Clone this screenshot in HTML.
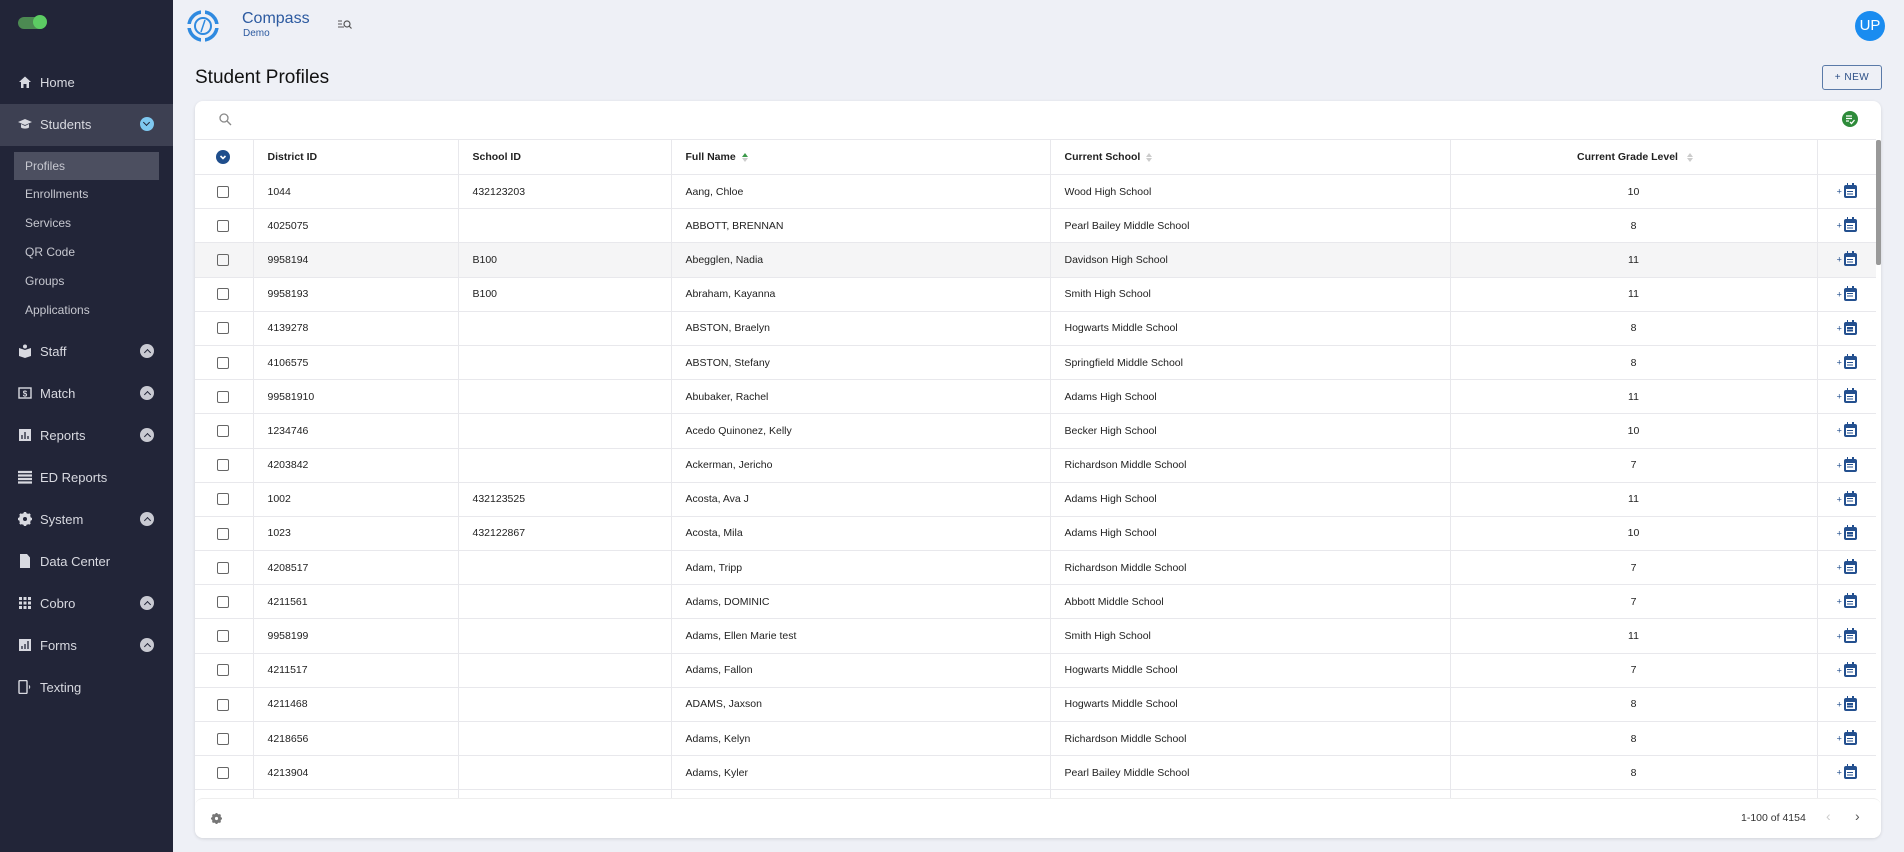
<!DOCTYPE html>
<html><head><meta charset="utf-8"><style>
*{box-sizing:border-box;margin:0;padding:0}
body{width:1904px;height:852px;overflow:hidden;background:#eef0f6;font-family:"Liberation Sans",sans-serif;position:relative}
.sb{position:absolute;left:0;top:0;width:173px;height:852px;background:#222538;color:#d8d9e0}
.nav{position:absolute;left:0;width:173px;height:28px;font-size:13px;display:flex;align-items:center}
.nav .ic{position:absolute;left:18px;top:7px;width:14px;height:14px}
.nav .t{position:absolute;left:40px}
.nav .ch{position:absolute;left:140px;top:7px;width:14px;height:14px;border-radius:50%;background:#c9cad2}
.nav .ch:after{content:"";position:absolute;left:4.5px;top:5.5px;width:4px;height:4px;border-left:1.6px solid #222538;border-top:1.6px solid #222538;transform:rotate(45deg)}
.sub{position:absolute;left:25px;font-size:12px;color:#c7c8d0}
.card{position:absolute;left:195px;top:101px;width:1686px;height:737px;background:#fff;border-radius:8px;box-shadow:0 1px 3px rgba(0,0,0,.12);overflow:hidden}
table{position:absolute;left:0;top:38px;border-collapse:collapse;table-layout:fixed;width:1681px;font-size:10.5px;color:#222}
td,th{height:34.2px;border-bottom:1px solid #e8e8ec;border-right:1px solid #e8e8ec;padding-left:14px;text-align:left;white-space:nowrap}
th{font-weight:bold;font-size:10.5px;height:35px;border-top:1px solid #e8e8ec}
td:last-child,th:last-child{border-right:none}
.cb{display:inline-block;width:12px;height:12px;border:1.6px solid #666;border-radius:2px;margin-left:8px;vertical-align:middle}
.gr{text-align:center;padding-left:0}
.act{padding-left:0;text-align:center}
.cal{display:inline-block;position:relative;width:13px;height:13px;background:#24508f;border-radius:2px;vertical-align:middle;margin-left:2px}
.cal i{position:absolute;left:2px;top:4px;width:9px;height:7px;background:#fff}
.cal i:before{content:"";position:absolute;left:1.5px;top:1.5px;width:6px;height:1.2px;background:#24508f;box-shadow:0 2.5px 0 #24508f}
.cal:before,.cal:after{content:"";position:absolute;top:-2px;width:1.5px;height:3px;background:#24508f}
.cal:before{left:3px}.cal:after{right:3px}
.pl{color:#24508f;font-size:9px;vertical-align:middle}
tr.hl td{background:#f5f5f6}
.sort{display:inline-block;margin-left:6px;vertical-align:middle;width:6px;height:9px;position:relative}
.sort:before{content:"";position:absolute;top:0;border-left:3px solid transparent;border-right:3px solid transparent;border-bottom:4px solid #ccc}
.sort:after{content:"";position:absolute;bottom:0;border-left:3px solid transparent;border-right:3px solid transparent;border-top:4px solid #ccc}
.sort.up:before{border-bottom-color:#3c9a4a}
</style></head><body>
<div class="sb">
 <div style="position:absolute;left:18px;top:17px;width:28px;height:12px;border-radius:6px;background:#4c8a52"></div>
 <div style="position:absolute;left:33px;top:15px;width:14px;height:14px;border-radius:50%;background:#5ccc63"></div>
 <div class="nav" style="top:68px"><svg class="ic" viewBox="0 0 14 14"><path d="M1 7L7 1.5 13 7H11V13H8.5V9H5.5V13H3V7Z" fill="#d8d9e0"/></svg><span class="t">Home</span></div>
 <div style="position:absolute;left:0;top:104px;width:173px;height:42px;background:#3d4052"></div>
 <div class="nav" style="top:110px"><svg class="ic" viewBox="0 0 14 14"><path d="M0 5L7 2 14 5 7 8Z M3 7V10.5C5 12 9 12 11 10.5V7L7 9Z" fill="#d8d9e0"/></svg><span class="t">Students</span><span class="ch" style="background:#7ec8f0;transform:rotate(180deg)"></span></div>
 <div style="position:absolute;left:14px;top:152px;width:145px;height:28px;background:#4c4f60"></div>
 <div class="sub" style="top:159px">Profiles</div>
 <div class="sub" style="top:187px">Enrollments</div>
 <div class="sub" style="top:216px">Services</div>
 <div class="sub" style="top:245px">QR Code</div>
 <div class="sub" style="top:274px">Groups</div>
 <div class="sub" style="top:303px">Applications</div>
 <div class="nav" style="top:337px"><svg class="ic" viewBox="0 0 14 14"><path d="M1 4L7 6 13 4V12L7 14 1 12Z" fill="#d8d9e0"/><circle cx="7" cy="2.5" r="2" fill="#d8d9e0"/></svg><span class="t">Staff</span><span class="ch"></span></div>
 <div class="nav" style="top:379px"><svg class="ic" viewBox="0 0 14 14"><rect x="1" y="2" width="12" height="10" fill="none" stroke="#d8d9e0" stroke-width="1.4"/><text x="7" y="10.5" font-size="8" fill="#d8d9e0" text-anchor="middle" font-weight="bold">$</text></svg><span class="t">Match</span><span class="ch"></span></div>
 <div class="nav" style="top:421px"><svg class="ic" viewBox="0 0 14 14"><rect x="1" y="1" width="12" height="12" fill="#d8d9e0"/><path d="M4 11V7M7 11V4M10 11V8" stroke="#222538" stroke-width="1.3"/></svg><span class="t">Reports</span><span class="ch"></span></div>
 <div class="nav" style="top:463px"><svg class="ic" viewBox="0 0 14 14"><path d="M0 2H14M0 5.5H14M0 9H14M0 12.5H14" stroke="#d8d9e0" stroke-width="2.2"/></svg><span class="t">ED Reports</span></div>
 <div class="nav" style="top:505px"><svg class="ic" viewBox="0 0 14 14"><circle cx="7" cy="7" r="4.5" fill="none" stroke="#d8d9e0" stroke-width="3"/><path d="M7 0V14M0 7H14M2 2L12 12M12 2L2 12" stroke="#d8d9e0" stroke-width="2.5"/><circle cx="7" cy="7" r="2" fill="#222538"/></svg><span class="t">System</span><span class="ch"></span></div>
 <div class="nav" style="top:547px"><svg class="ic" viewBox="0 0 14 14"><path d="M2 0H9L12 3.5V14H2Z" fill="#d8d9e0"/></svg><span class="t">Data Center</span></div>
 <div class="nav" style="top:589px"><svg class="ic" viewBox="0 0 14 14"><g fill="#d8d9e0"><rect x="1" y="1" width="3" height="3"/><rect x="5.5" y="1" width="3" height="3"/><rect x="10" y="1" width="3" height="3"/><rect x="1" y="5.5" width="3" height="3"/><rect x="5.5" y="5.5" width="3" height="3"/><rect x="10" y="5.5" width="3" height="3"/><rect x="1" y="10" width="3" height="3"/><rect x="5.5" y="10" width="3" height="3"/><rect x="10" y="10" width="3" height="3"/></g></svg><span class="t">Cobro</span><span class="ch"></span></div>
 <div class="nav" style="top:631px"><svg class="ic" viewBox="0 0 14 14"><rect x="1" y="1" width="12" height="12" fill="#d8d9e0"/><path d="M4 11V8M7 11V6M10 11V3" stroke="#222538" stroke-width="1.3"/></svg><span class="t">Forms</span><span class="ch"></span></div>
 <div class="nav" style="top:673px"><svg class="ic" viewBox="0 0 14 14"><rect x="1" y="0.5" width="8" height="13" rx="1" fill="none" stroke="#d8d9e0" stroke-width="1.4"/><path d="M11 5.5Q12.5 7 11 8.5" stroke="#d8d9e0" fill="none"/></svg><span class="t">Texting</span></div>
</div>
<svg style="position:absolute;left:185px;top:8px" width="36" height="36" viewBox="0 0 36 36"><circle cx="18" cy="18" r="14" fill="none" stroke="#2f8ae0" stroke-width="3.5"/><circle cx="18" cy="18" r="8" fill="none" stroke="#2f8ae0" stroke-width="2"/><path d="M18 1V8M18 28V35M1 18H8M28 18H35" stroke="#eef0f6" stroke-width="4"/><path d="M20 12L16 24 18 18Z" fill="#2f8ae0" stroke="#2f8ae0" stroke-width="1.5"/></svg>
<div style="position:absolute;left:242px;top:10px;font-size:16px;color:#2c5aa0">Compass</div>
<div style="position:absolute;left:243px;top:28px;font-size:10px;color:#2c5aa0">Demo</div>
<svg style="position:absolute;left:338px;top:19px" width="14" height="12" viewBox="0 0 14 12"><path d="M0 2H4M0 5H4M0 8H6" stroke="#555" stroke-width="1"/><circle cx="9" cy="5" r="3" fill="none" stroke="#555" stroke-width="1.2"/><path d="M11 7L13.5 9.5" stroke="#555" stroke-width="1.2"/></svg>
<div style="position:absolute;left:1855px;top:11px;width:30px;height:30px;border-radius:50%;background:#1a8cf0;color:#fff;font-size:15px;text-align:center;line-height:30px">UP</div>
<div style="position:absolute;left:195px;top:67px;font-size:19px;color:#111">Student Profiles</div>
<div style="position:absolute;left:1822px;top:65px;width:60px;height:25px;border:1px solid #5a7aa8;border-radius:3px;font-size:10px;color:#2c4f86;text-align:center;line-height:23px;letter-spacing:.5px">+ NEW</div>
<div class="card">
 <svg style="position:absolute;left:24px;top:12px" width="13" height="13" viewBox="0 0 13 13"><circle cx="5" cy="5" r="4" fill="none" stroke="#888" stroke-width="1.3"/><path d="M8 8L12 12" stroke="#888" stroke-width="1.3"/></svg>
 <svg style="position:absolute;left:1647px;top:10px" width="16" height="16" viewBox="0 0 16 16"><circle cx="8" cy="8" r="8" fill="#2e8b3a"/><path d="M4 5H10M4 7.5H10M4 10H7" stroke="#fff" stroke-width="1.3"/><path d="M8 11L9.5 12.5 12.5 9" stroke="#fff" stroke-width="1.3" fill="none"/></svg>
 <table>
 <colgroup><col style="width:58px"><col style="width:205px"><col style="width:213px"><col style="width:379px"><col style="width:400px"><col style="width:367px"><col style="width:59px"></colgroup>
 <tr><th><svg style="margin-left:7px;vertical-align:middle" width="14" height="14" viewBox="0 0 14 14"><circle cx="7" cy="7" r="7" fill="#1f4e8c"/><path d="M4.5 6L7 8.5 9.5 6" stroke="#fff" stroke-width="1.6" fill="none"/></svg></th><th>District ID</th><th>School ID</th><th>Full Name<span class="sort up"></span></th><th>Current School<span class="sort"></span></th><th class="gr">Current Grade Level<span class="sort"></span></th><th></th></tr>
 <tr><td><span class="cb"></span></td><td>1044</td><td>432123203</td><td>Aang, Chloe</td><td>Wood High School</td><td class="gr">10</td><td class="act"><span class="pl">+</span><span class="cal"><i></i></span></td></tr>
 <tr><td><span class="cb"></span></td><td>4025075</td><td></td><td>ABBOTT, BRENNAN</td><td>Pearl Bailey Middle School</td><td class="gr">8</td><td class="act"><span class="pl">+</span><span class="cal"><i></i></span></td></tr>
 <tr class="hl"><td><span class="cb"></span></td><td>9958194</td><td>B100</td><td>Abegglen, Nadia</td><td>Davidson High School</td><td class="gr">11</td><td class="act"><span class="pl">+</span><span class="cal"><i></i></span></td></tr>
 <tr><td><span class="cb"></span></td><td>9958193</td><td>B100</td><td>Abraham, Kayanna</td><td>Smith High School</td><td class="gr">11</td><td class="act"><span class="pl">+</span><span class="cal"><i></i></span></td></tr>
 <tr><td><span class="cb"></span></td><td>4139278</td><td></td><td>ABSTON, Braelyn</td><td>Hogwarts Middle School</td><td class="gr">8</td><td class="act"><span class="pl">+</span><span class="cal"><i></i></span></td></tr>
 <tr><td><span class="cb"></span></td><td>4106575</td><td></td><td>ABSTON, Stefany</td><td>Springfield Middle School</td><td class="gr">8</td><td class="act"><span class="pl">+</span><span class="cal"><i></i></span></td></tr>
 <tr><td><span class="cb"></span></td><td>99581910</td><td></td><td>Abubaker, Rachel</td><td>Adams High School</td><td class="gr">11</td><td class="act"><span class="pl">+</span><span class="cal"><i></i></span></td></tr>
 <tr><td><span class="cb"></span></td><td>1234746</td><td></td><td>Acedo Quinonez, Kelly</td><td>Becker High School</td><td class="gr">10</td><td class="act"><span class="pl">+</span><span class="cal"><i></i></span></td></tr>
 <tr><td><span class="cb"></span></td><td>4203842</td><td></td><td>Ackerman, Jericho</td><td>Richardson Middle School</td><td class="gr">7</td><td class="act"><span class="pl">+</span><span class="cal"><i></i></span></td></tr>
 <tr><td><span class="cb"></span></td><td>1002</td><td>432123525</td><td>Acosta, Ava J</td><td>Adams High School</td><td class="gr">11</td><td class="act"><span class="pl">+</span><span class="cal"><i></i></span></td></tr>
 <tr><td><span class="cb"></span></td><td>1023</td><td>432122867</td><td>Acosta, Mila</td><td>Adams High School</td><td class="gr">10</td><td class="act"><span class="pl">+</span><span class="cal"><i></i></span></td></tr>
 <tr><td><span class="cb"></span></td><td>4208517</td><td></td><td>Adam, Tripp</td><td>Richardson Middle School</td><td class="gr">7</td><td class="act"><span class="pl">+</span><span class="cal"><i></i></span></td></tr>
 <tr><td><span class="cb"></span></td><td>4211561</td><td></td><td>Adams, DOMINIC</td><td>Abbott Middle School</td><td class="gr">7</td><td class="act"><span class="pl">+</span><span class="cal"><i></i></span></td></tr>
 <tr><td><span class="cb"></span></td><td>9958199</td><td></td><td>Adams, Ellen Marie test</td><td>Smith High School</td><td class="gr">11</td><td class="act"><span class="pl">+</span><span class="cal"><i></i></span></td></tr>
 <tr><td><span class="cb"></span></td><td>4211517</td><td></td><td>Adams, Fallon</td><td>Hogwarts Middle School</td><td class="gr">7</td><td class="act"><span class="pl">+</span><span class="cal"><i></i></span></td></tr>
 <tr><td><span class="cb"></span></td><td>4211468</td><td></td><td>ADAMS, Jaxson</td><td>Hogwarts Middle School</td><td class="gr">8</td><td class="act"><span class="pl">+</span><span class="cal"><i></i></span></td></tr>
 <tr><td><span class="cb"></span></td><td>4218656</td><td></td><td>Adams, Kelyn</td><td>Richardson Middle School</td><td class="gr">8</td><td class="act"><span class="pl">+</span><span class="cal"><i></i></span></td></tr>
 <tr><td><span class="cb"></span></td><td>4213904</td><td></td><td>Adams, Kyler</td><td>Pearl Bailey Middle School</td><td class="gr">8</td><td class="act"><span class="pl">+</span><span class="cal"><i></i></span></td></tr>
 <tr><td></td><td></td><td></td><td></td><td></td><td></td><td></td></tr>
 </table>
 <div style="position:absolute;right:0;top:39px;width:5px;height:125px;background:#999;border-radius:2px"></div>
 <div style="position:absolute;left:0;top:697px;width:1686px;height:40px;background:#fff;border-top:1px solid #eee;border-radius:8px"></div>
 <svg style="position:absolute;left:16px;top:712px" width="11" height="11" viewBox="0 0 14 14"><circle cx="7" cy="7" r="4.5" fill="none" stroke="#777" stroke-width="3"/><path d="M7 0V14M0 7H14M2 2L12 12M12 2L2 12" stroke="#777" stroke-width="2.5"/><circle cx="7" cy="7" r="2" fill="#fff"/></svg>
 <div style="position:absolute;left:1546px;top:711px;font-size:10.5px;color:#333">1-100 of 4154</div>
 <div style="position:absolute;left:1631px;top:707px;font-size:14px;color:#ccc">&#8249;</div>
 <div style="position:absolute;left:1660px;top:707px;font-size:14px;color:#555">&#8250;</div>
</div>
</body></html>
